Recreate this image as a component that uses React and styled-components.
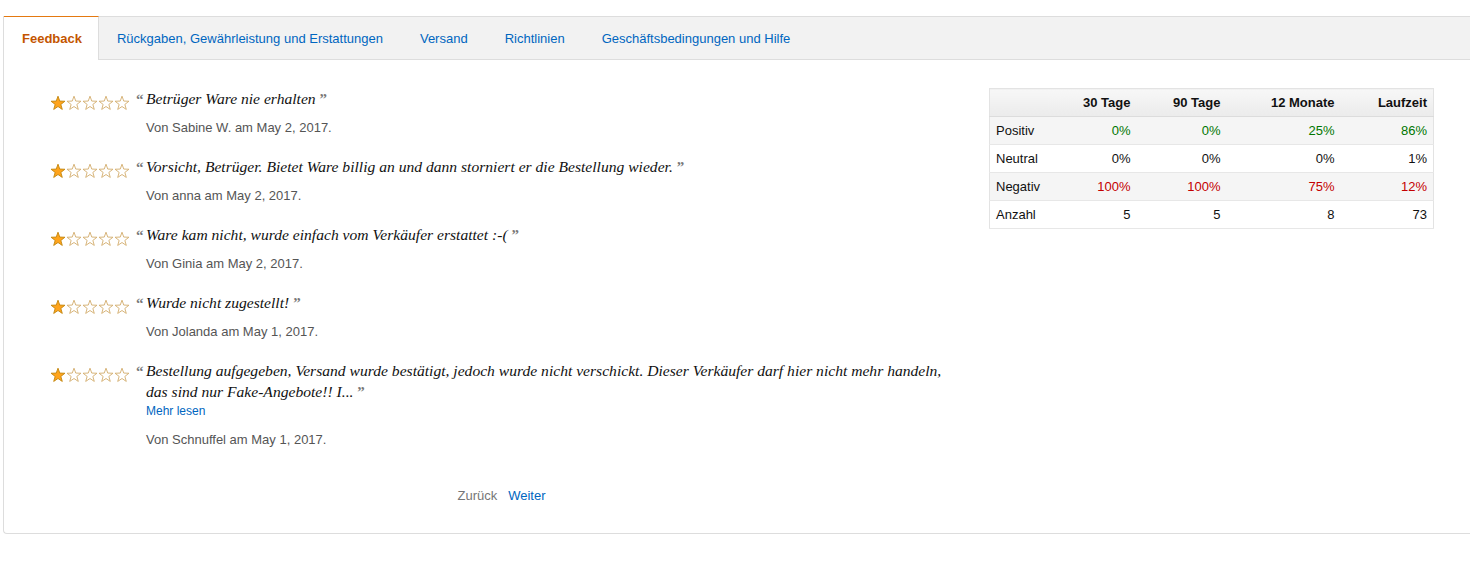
import styled, { createGlobalStyle } from "styled-components";

const GlobalStyle = createGlobalStyle`
  body {
    margin: 0;
    background: #fff;
    font-family: "Liberation Sans", Arial, sans-serif;
    font-size: 13px;
    color: #111;
  }
`;

const tabs = [
  "Feedback",
  "Rückgaben, Gewährleistung und Erstattungen",
  "Versand",
  "Richtlinien",
  "Geschäftsbedingungen und Hilfe",
];

const reviews = [
  { text: "Betrüger Ware nie erhalten", by: "Von Sabine W. am May 2, 2017." },
  {
    text: "Vorsicht, Betrüger. Bietet Ware billig an und dann storniert er die Bestellung wieder.",
    by: "Von anna am May 2, 2017.",
  },
  {
    text: "Ware kam nicht, wurde einfach vom Verkäufer erstattet :-(",
    by: "Von Ginia am May 2, 2017.",
  },
  { text: "Wurde nicht zugestellt!", by: "Von Jolanda am May 1, 2017." },
  {
    text: "Bestellung aufgegeben, Versand wurde bestätigt, jedoch wurde nicht verschickt. Dieser Verkäufer darf hier nicht mehr handeln, das sind nur Fake-Angebote!! I...",
    by: "Von Schnuffel am May 1, 2017.",
    more: true,
  },
];

const stats = [
  { label: "Positiv", tone: "good", values: ["0%", "0%", "25%", "86%"] },
  { label: "Neutral", values: ["0%", "0%", "0%", "1%"] },
  { label: "Negativ", tone: "bad", values: ["100%", "100%", "75%", "12%"] },
  { label: "Anzahl", values: ["5", "5", "8", "73"] },
];

const STAR = "8,1.2 9.76,6.07 14.94,6.24 10.85,9.43 12.29,14.41 8,11.5 3.71,14.41 5.15,9.43 1.06,6.24 6.24,6.07";

function Stars({ count }) {
  return (
    <StarRow>
      {[0, 1, 2, 3, 4].map((i) => (
        <svg key={i} width="16" height="16" viewBox="0 0 16 16">
          <polygon
            points={STAR}
            fill={i < count ? "#ffa41c" : "#fff"}
            stroke={i < count ? "#c2860f" : "#d2ad6c"}
            strokeWidth="0.9"
            strokeLinejoin="round"
          />
        </svg>
      ))}
    </StarRow>
  );
}

function App() {
  return (
    <>
      <GlobalStyle />
      <Page>
        <Panel>
          <TabBar>
            {tabs.map((t, i) => (
              <Tab key={t} $active={i === 0}>
                {t}
              </Tab>
            ))}
          </TabBar>
          <Body>
            <Reviews>
              {reviews.map((r) => (
                <Review key={r.by}>
                  <Stars count={1} />
                  <ReviewText>
                    <Quote>
                      <Mark>“</Mark>{r.text} <Mark>”</Mark>
                    </Quote>
                    {r.more && <More>Mehr lesen</More>}
                    <Byline>{r.by}</Byline>
                  </ReviewText>
                </Review>
              ))}
              <Pager>
                <PageLink>Zurück</PageLink>
                <PageLink $link>Weiter</PageLink>
              </Pager>
            </Reviews>
            <Side>
              <Table>
                <colgroup>
                  <col style={{ width: 57 }} />
                  <col style={{ width: 90 }} />
                  <col style={{ width: 90 }} />
                  <col style={{ width: 114 }} />
                  <col style={{ width: 93 }} />
                </colgroup>
                <thead>
                  <tr>
                    <Th />
                    <Th>30 Tage</Th>
                    <Th>90 Tage</Th>
                    <Th>12 Monate</Th>
                    <Th>Laufzeit</Th>
                  </tr>
                </thead>
                <tbody>
                  {stats.map((row, i) => (
                    <Row key={row.label} $striped={i % 2 === 0}>
                      <Label>{row.label}</Label>
                      {row.values.map((v, j) => (
                        <Cell key={j} $tone={row.tone}>
                          {v}
                        </Cell>
                      ))}
                    </Row>
                  ))}
                </tbody>
              </Table>
            </Side>
          </Body>
        </Panel>
      </Page>
    </>
  );
}

const Page = styled.div`
  padding: 16px 0 0 3px;
`;

const Panel = styled.div`
  border: 1px solid #ddd;
  border-right: none;
  border-radius: 0 0 0 4px;
`;

const TabBar = styled.div`
  display: flex;
  height: 42px;
  background: #f2f2f2;
  border-bottom: 1px solid #ddd;
`;

const Tab = styled.div`
  display: flex;
  align-items: center;
  padding: ${(p) => (p.$active ? "0 16px 0 18px" : "0 18px")};
  font-size: 13px;
  color: ${(p) => (p.$active ? "#c45500" : "#0066c0")};
  font-weight: ${(p) => (p.$active ? 700 : 400)};
  background: ${(p) => (p.$active ? "#fff" : "transparent")};
  border-top: 1px solid ${(p) => (p.$active ? "#e47911" : "transparent")};
  border-right: 1px solid ${(p) => (p.$active ? "#ddd" : "transparent")};
  margin: ${(p) => (p.$active ? "-1px 0 -1px 0" : "0")};
  position: relative;
  cursor: pointer;
`;

const Body = styled.div`
  display: flex;
  padding: 28px 36px 0 0;
`;

const Reviews = styled.div`
  flex: 1;
  padding: 0 36px 28px 46px;
`;

const Review = styled.div`
  display: flex;
  margin-bottom: 19px;
`;

const StarRow = styled.div`
  display: flex;
  width: 80px;
  flex-shrink: 0;
  margin: 7px 16px 0 0;
  height: 16px;
`;

const ReviewText = styled.div`
  flex: 1;
`;

const Quote = styled.div`
  font-family: "Liberation Serif", "Times New Roman", serif;
  font-style: italic;
  font-size: 15.6px;
  line-height: 21px;
  color: #111;
  text-indent: -10px;
`;

const Mark = styled.span`
  display: inline-block;
  width: 10px;
  text-indent: 0;
  font-style: normal;
  font-weight: 700;
  font-size: 15px;
  line-height: 10px;
  color: #777;
`;

const More = styled.div`
  font-size: 12px;
  line-height: 19px;
  color: #0066c0;
  cursor: pointer;
`;

const Byline = styled.div`
  margin-top: 9px;
  font-size: 13px;
  line-height: 19px;
  color: #555;
`;

const Pager = styled.div`
  display: flex;
  justify-content: center;
  gap: 11px;
  margin-top: 37px;
  line-height: 19px;
`;

const PageLink = styled.span`
  font-size: 13px;
  color: ${(p) => (p.$link ? "#0066c0" : "#767676")};
  cursor: ${(p) => (p.$link ? "pointer" : "default")};
`;

const Side = styled.div`
  width: 445px;
  flex-shrink: 0;
`;

const Table = styled.table`
  width: 100%;
  table-layout: fixed;
  border-collapse: collapse;
  border: 1px solid #e3e3e3;
  font-size: 13px;
`;

const Th = styled.th`
  height: 27px;
  padding: 0 6px;
  text-align: right;
  font-weight: 700;
  color: #111;
  background: linear-gradient(#f7f7f7, #ebebeb);
  border-bottom: 1px solid #dcdcdc;
`;

const Row = styled.tr`
  background: ${(p) => (p.$striped ? "#f5f5f5" : "#fff")};
  border-bottom: 1px solid #e7e7e7;
`;

const Label = styled.td`
  height: 27px;
  padding: 0 6px;
  color: #111;
`;

const Cell = styled.td`
  padding: 0 6px;
  text-align: right;
  color: ${(p) =>
    p.$tone === "good" ? "#007600" : p.$tone === "bad" ? "#c40000" : "#111"};
`;

export default App;
